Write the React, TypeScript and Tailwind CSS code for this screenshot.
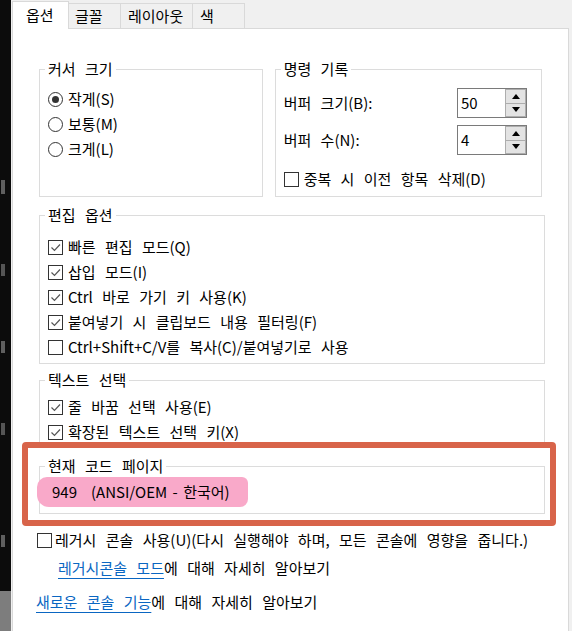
import React from 'react';

const font = { fontFamily: '"Noto Sans CJK KR", "Noto Sans", sans-serif' };

function Check({ checked = false }: { checked?: boolean }) {
  return (
    <span className="flex h-[15px] w-[15px] shrink-0 items-center justify-center border border-[#333] bg-white">
      {checked && (
        <svg width="13" height="13" viewBox="0 0 13 13">
          <polyline points="2.5,6.5 5.5,9.5 11,3.5" fill="none" stroke="#555" strokeWidth="1.2" />
        </svg>
      )}
    </span>
  );
}

function Radio({ checked = false }: { checked?: boolean }) {
  return (
    <span className="flex h-[15px] w-[15px] shrink-0 items-center justify-center rounded-full border border-[#333] bg-white">
      {checked && <span className="h-[7px] w-[7px] rounded-full bg-[#333]" />}
    </span>
  );
}

function Spin({ value }: { value: string }) {
  return (
    <div className="flex h-[30px] w-[70px] border border-[#7a7a7a] bg-white">
      <div className="flex flex-1 items-center pl-[3px]">{value}</div>
      <div className="flex w-[21px] flex-col">
        <div className="flex flex-1 items-center justify-center border border-[#adadad] bg-[#e3e3e3]">
          <svg width="8" height="5" viewBox="0 0 8 5"><polygon points="0,5 8,5 4,0" fill="#000" /></svg>
        </div>
        <div className="flex flex-1 items-center justify-center border border-t-0 border-[#adadad] bg-[#e3e3e3]">
          <svg width="8" height="5" viewBox="0 0 8 5"><polygon points="0,0 8,0 4,5" fill="#000" /></svg>
        </div>
      </div>
    </div>
  );
}

function Group({ title, className, children }: { title: string; className: string; children?: React.ReactNode }) {
  return (
    <fieldset className={`border border-[#dcdcdc] ${className}`}>
      <legend className="ml-[5px] px-[3px] leading-[20px]">{title}</legend>
      {children}
    </fieldset>
  );
}

function Row({ children }: { children: React.ReactNode }) {
  return <div className="flex h-[25px] items-center gap-[5px]">{children}</div>;
}

const tabs = [
  { label: '옵션', w: 'w-[57px] h-[28px] pl-[13px] bg-white border-b-0' },
  { label: '글꼴', w: 'w-[53px] h-[26px] pl-[6px] bg-[#f0f0f0] -ml-px' },
  { label: '레이아웃', w: 'w-[73px] h-[26px] pl-[7px] bg-[#f0f0f0] -ml-px' },
  { label: '색', w: 'w-[53px] h-[26px] pl-[7px] bg-[#f0f0f0] -ml-px' },
];

export default function App() {
  return (
    <div
      className="flex h-[631px] w-[572px] overflow-hidden bg-[#f0f0f0] text-[15px] text-black [word-spacing:6px]"
      style={font}
    >
      {/* console window peeking out on the left */}
      <div className="flex w-[11px] shrink-0 flex-col bg-[#0c0c0c] pt-[180px]">
        <div className="ml-[1px] h-[14px] w-[4px] bg-[#5f5f5f]" />
        <div className="ml-[1px] mt-[70px] h-[12px] w-[4px] bg-[#555]" />
        <div className="ml-[1px] mt-[65px] h-[12px] w-[4px] bg-[#5f5f5f]" />
        <div className="ml-[1px] mt-[70px] h-[12px] w-[4px] bg-[#555]" />
        <div className="ml-[1px] mt-[100px] h-[12px] w-[4px] bg-[#5f5f5f]" />
        <div className="mt-auto h-[40px] w-full bg-[#7d7d7d]" />
      </div>

      <div className="flex flex-1 flex-col">
        <div className="relative z-10 -mb-px flex h-[29px] items-end pl-[1px]">
          {tabs.map((t) => (
            <div key={t.label} className={`flex items-center border border-[#d9d9d9] ${t.w}`}>
              {t.label}
            </div>
          ))}
        </div>

        <div className="relative ml-[1px] w-[557px] flex-1 border border-b-0 border-[#d9d9d9] bg-white">
          <div className="flex flex-col px-[26px] pt-[30px]">
            <div className="flex gap-[12px]">
              <Group title="커서 크기" className="h-[138px] w-[225px]">
                <div className="mt-[8px] pl-[8px]">
                  <Row><Radio checked />작게(S)</Row>
                  <Row><Radio />보통(M)</Row>
                  <Row><Radio />크게(L)</Row>
                </div>
              </Group>
              <Group title="명령 기록" className="h-[138px] w-[269px]">
                <div className="mt-[9px] flex flex-col gap-[7px] pl-[8px] pr-[14px]">
                  <div className="flex items-center justify-between">
                    <span>버퍼 크기(B):</span>
                    <Spin value="50" />
                  </div>
                  <div className="flex items-center justify-between">
                    <span>버퍼 수(N):</span>
                    <Spin value="4" />
                  </div>
                </div>
                <div className="mt-[12px] pl-[8px]">
                  <Row><Check />중복 시 이전 항목 삭제(D)</Row>
                </div>
              </Group>
            </div>

            <Group title="편집 옵션" className="mt-[8px] h-[159px] w-[506px]">
              <div className="mt-[10px] pl-[8px]">
                <Row><Check checked />빠른 편집 모드(Q)</Row>
                <Row><Check checked />삽입 모드(I)</Row>
                <Row><Check checked />Ctrl 바로 가기 키 사용(K)</Row>
                <Row><Check checked />붙여넣기 시 클립보드 내용 필터링(F)</Row>
                <Row><Check />Ctrl+Shift+C/V를 복사(C)/붙여넣기로 사용</Row>
              </div>
            </Group>

            <Group title="텍스트 선택" className="mt-[6px] h-[77px] w-[506px]">
              <div className="mt-[5px] pl-[8px]">
                <Row><Check checked />줄 바꿈 선택 사용(E)</Row>
                <Row><Check checked />확장된 텍스트 선택 키(X)</Row>
              </div>
            </Group>

            <Group title="현재 코드 페이지" className="mt-[9px] h-[58px] w-[506px]">
              <div className="mt-[1px] pl-[8px]">
                <span className="-ml-[11px] inline-flex h-[30px] items-center rounded-[10px_6px_8px_12px] bg-[#f9a9c9] pl-[15px] pr-[18px] [word-spacing:2px]">
                  <span>949</span>
                  <span className="ml-[14px]">(ANSI/OEM - 한국어)</span>
                </span>
              </div>
            </Group>
          </div>

          <div className="flex flex-col pl-[24px]">
            <div className="mt-[14px] flex h-[25px] items-center gap-[3px]">
              <Check />
              레거시 콘솔 사용(U)(다시 실행해야 하며, 모든 콘솔에 영향을 줍니다.)
            </div>
            <div className="ml-[21px] mt-[3px] flex h-[25px] items-center">
              <span className="text-[#0a66c2] underline underline-offset-[4px]">레거시콘솔 모드</span>
              에 대해 자세히 알아보기
            </div>
            <div className="-ml-[1px] mt-[9px] flex h-[25px] items-center">
              <span className="text-[#0a66c2] underline underline-offset-[4px]">새로운 콘솔 기능</span>
              에 대해 자세히 알아보기
            </div>
          </div>

          {/* annotation box drawn over the screenshot */}
          <div className="absolute left-[9px] top-[413px] h-[84px] w-[534px] rounded-[4px] border-[6px] border-[#d8644a]" />
        </div>
      </div>
      <div className="w-[3px] shrink-0" />
    </div>
  );
}
